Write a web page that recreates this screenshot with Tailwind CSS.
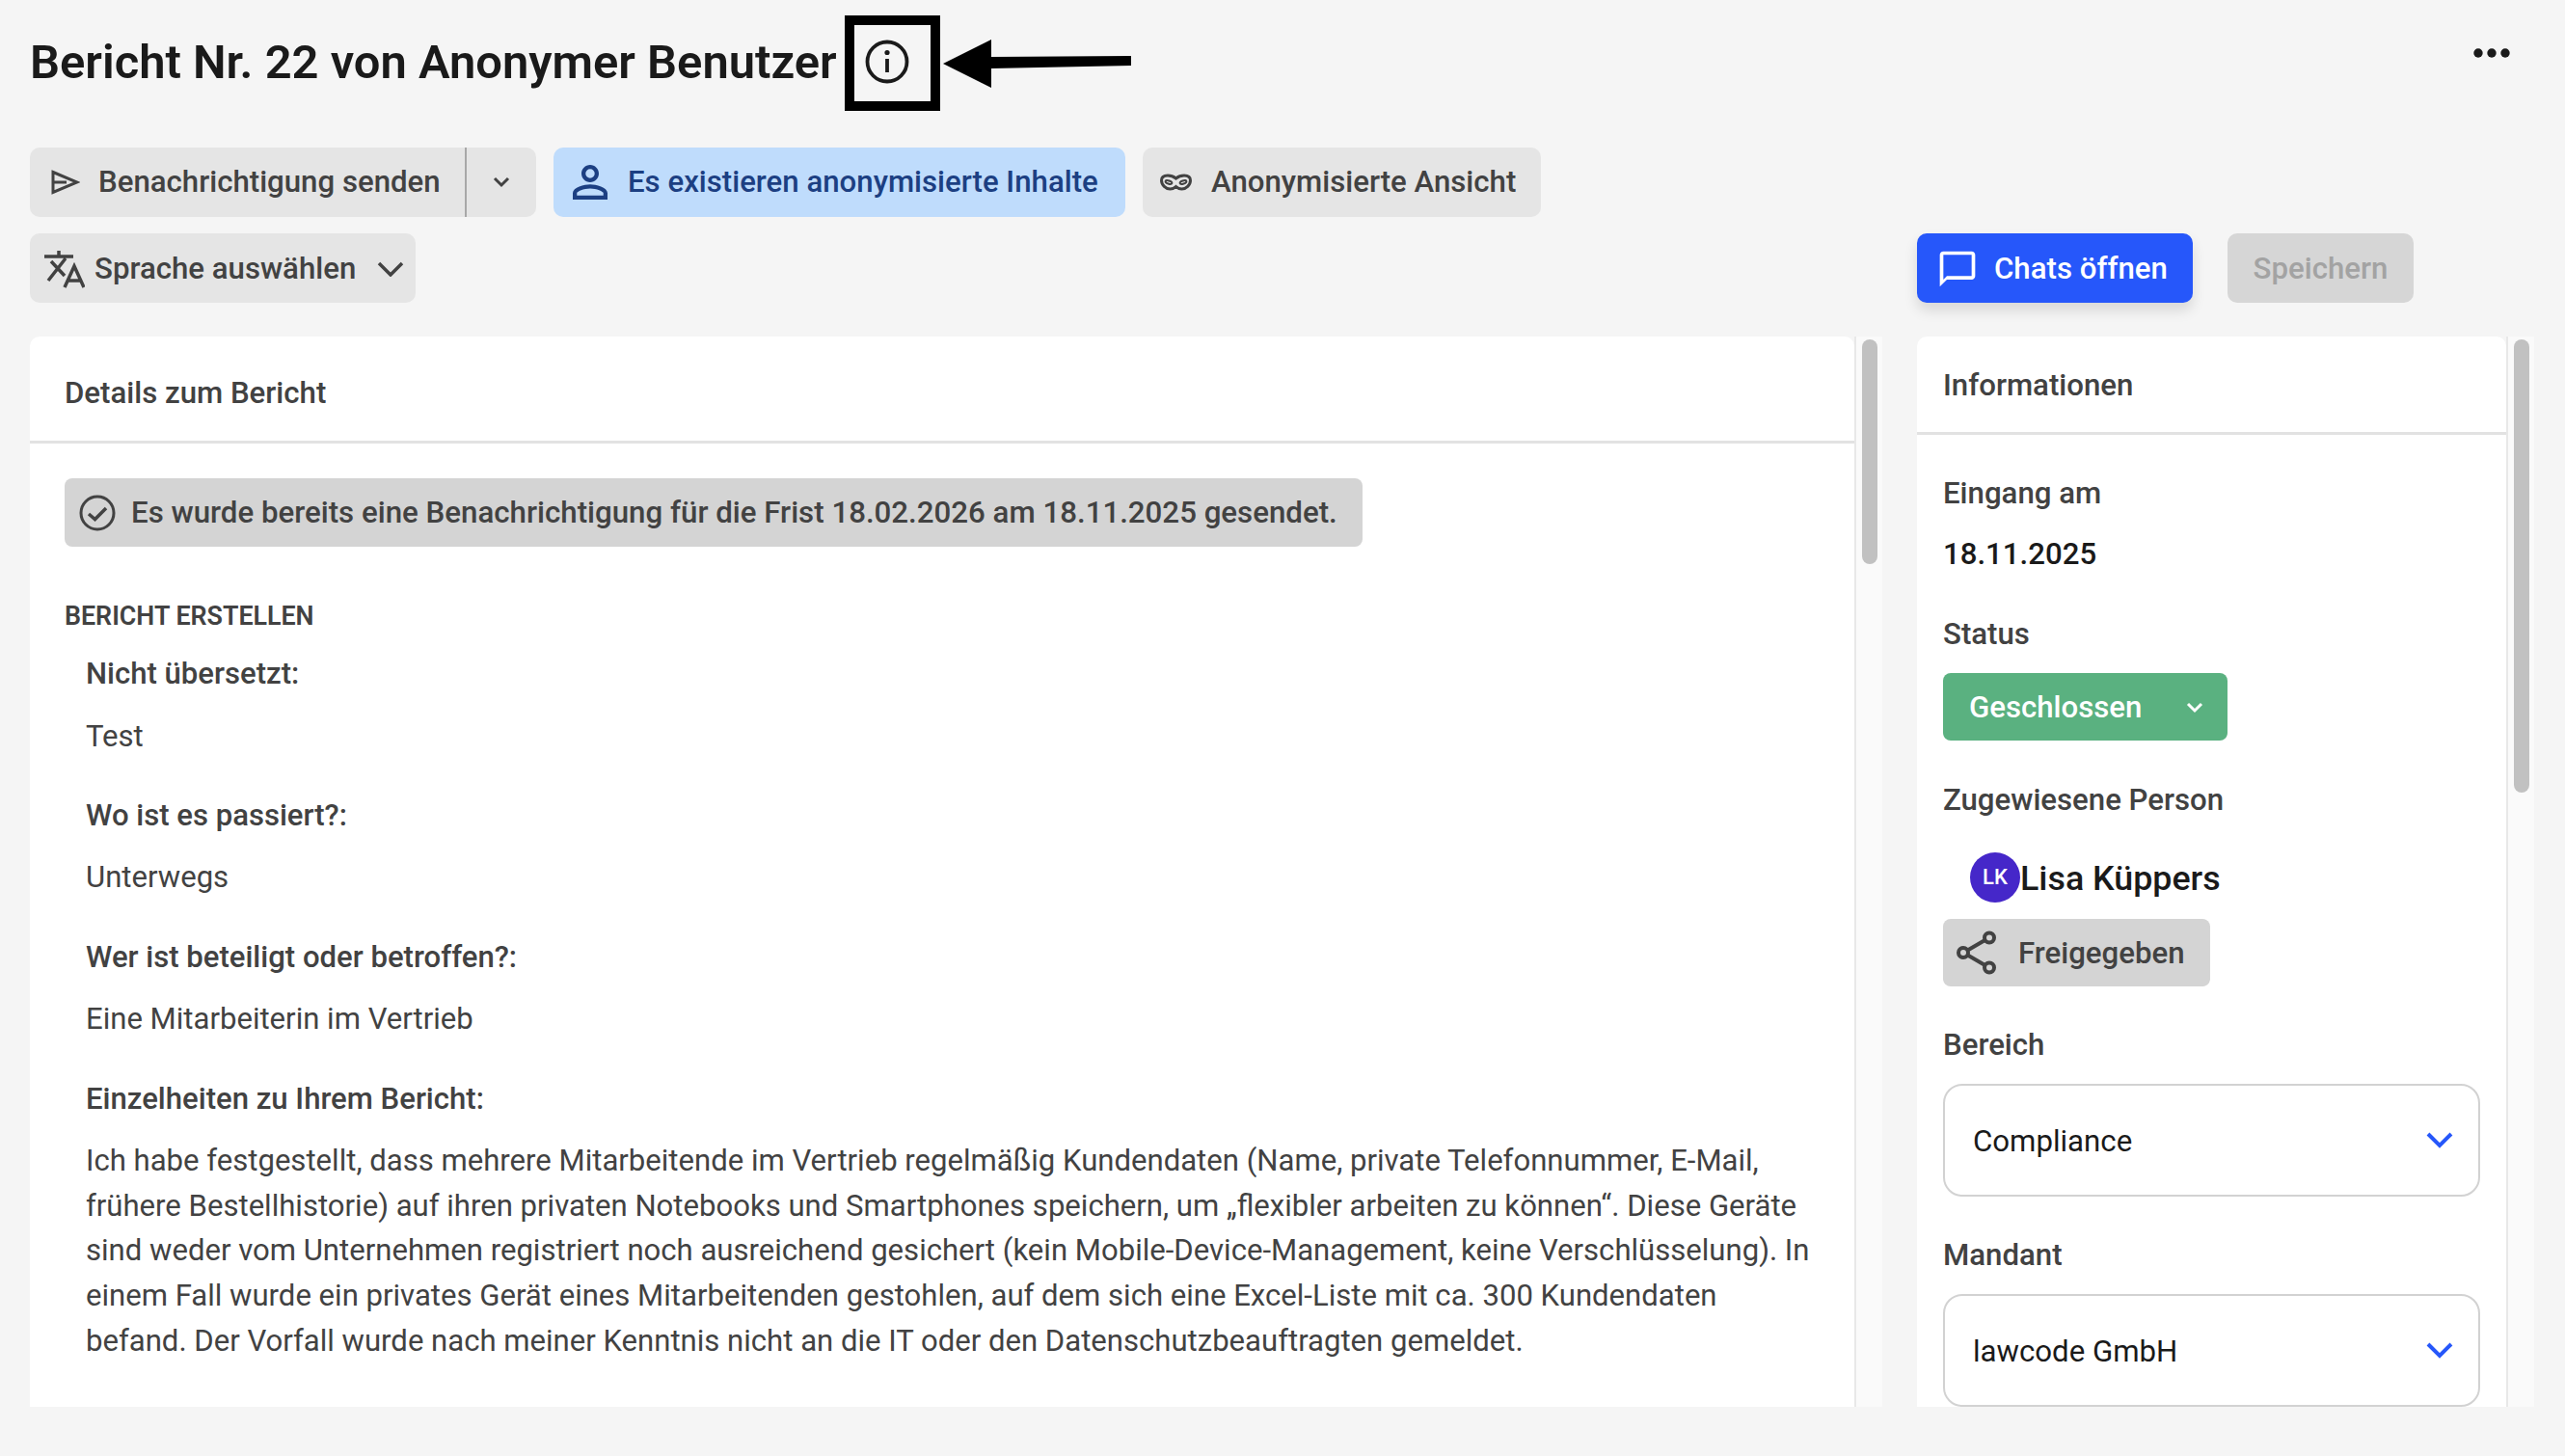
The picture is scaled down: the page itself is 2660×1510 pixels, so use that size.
<!DOCTYPE html>
<html lang="de">
<head>
<meta charset="utf-8">
<script src="https://cdn.jsdelivr.net/npm/@tailwindcss/browser@4"></script>
</head>
<body class="relative w-[2660px] h-[1510px] overflow-hidden bg-[#f5f5f5] font-['Roboto',sans-serif] text-[#424242]">

<header class="flex items-center justify-between h-[128px] pl-[31px] pr-[55px]">
  <div class="flex items-center">
    <h1 class="w-[836px] pt-[2px] whitespace-nowrap text-[48.9px] leading-[64px] font-semibold text-[#1a1a1a]">Bericht Nr. 22 von Anonymer Benutzer</h1>
    <svg class="ml-[30px] w-[46px] h-[46px]" viewBox="0 0 46 46" fill="none" stroke="#1a1a1a" stroke-width="3.8"><circle cx="23" cy="23" r="20.5"/><path d="M23 20v14"/><circle cx="23" cy="13.5" r="2.6" fill="#1a1a1a" stroke="none"/></svg>
  </div>
  <svg class="mb-[18px] w-[40px] h-[10px]" viewBox="0 0 40 10" fill="#1a1a1a"><circle cx="5" cy="5" r="4.7"/><circle cx="19" cy="5" r="4.7"/><circle cx="33" cy="5" r="4.7"/></svg>
</header>

<div class="flex items-center gap-[18px] h-[72px] mt-[25px] pl-[31px] text-[31.2px] font-medium">
  <div class="flex h-full w-[525px] rounded-[10px] bg-[#e5e5e5]">
    <div class="flex items-center gap-[19px] w-[453px] pl-[22px] border-r-2 border-[#a8a8a8]">
      <svg class="w-[30px] h-[26px] shrink-0" viewBox="0 0 30 26" fill="none" stroke="#424242" stroke-width="3"><path d="M2 2.500L27 13 2 23.500ZM2 13H16"/></svg>
      <span>Benachrichtigung senden</span>
    </div>
    <div class="flex flex-1 items-center justify-center">
      <svg class="w-[20px] h-[12px]" viewBox="0 0 20 12" fill="none" stroke="#424242" stroke-width="3"><path d="M3 2l7 7 7-7"/></svg>
    </div>
  </div>
  <div class="flex items-center gap-[12px] h-full w-[593px] pl-[11px] rounded-[10px] bg-[#bfdcfc] text-[#1c3f82]">
    <svg class="w-[54px] h-[54px] shrink-0" viewBox="0 0 24 24" fill="#1c3f82"><path d="M12 5.900a2.100 2.100 0 110 4.200 2.100 2.100 0 010-4.200m0 9c2.970 0 6.100 1.460 6.100 2.100v1.100H5.900V17c0-.64 3.130-2.100 6.100-2.100M12 4C9.790 4 8 5.790 8 8s1.790 4 4 4 4-1.790 4-4-1.790-4-4-4zm0 9c-2.670 0-8 1.340-8 4v3h16v-3c0-2.660-5.330-4-8-4z"/></svg>
    <span>Es existieren anonymisierte Inhalte</span>
  </div>
  <div class="flex items-center gap-[20px] h-full w-[413px] pl-[18px] rounded-[10px] bg-[#e5e5e5]">
    <svg class="w-[33px] h-[18px] shrink-0" viewBox="0 0 33 18" fill="none" stroke="#424242" stroke-width="3"><path d="M8 2C11 2 14 3 16.500 5C19 3 22 2 25 2C29 2 31.500 3.500 31.500 7C31.500 12 27 16 22.500 16C20 16 18 15 16.500 13.500C15 15 13 16 10.500 16C6 16 1.500 12 1.500 7C1.500 3.500 4 2 8 2Z"/><ellipse cx="9" cy="9" rx="3.500" ry="1.600" transform="rotate(20 9 9)" stroke-width="2"/><ellipse cx="24" cy="9" rx="3.500" ry="1.600" transform="rotate(-20 24 9)" stroke-width="2"/></svg>
    <span>Anonymisierte Ansicht</span>
  </div>
</div>

<div class="flex items-center justify-between h-[72px] mt-[17px] pl-[31px] pr-[157px] text-[31.2px] font-medium">
  <div class="flex items-center h-full w-[400px] pl-[15px] pt-[2px] rounded-[10px] bg-[#e5e5e5]">
    <svg class="w-[42px] h-[40px] shrink-0" viewBox="0 0 42 40" fill="none" stroke="#424242" stroke-width="3.500"><path d="M0 7H30M15 1V7M22 9L4 32M7 12L21 27M21 39L31 17L41 39M24 32H38"/></svg>
    <span class="ml-[10px]">Sprache auswählen</span>
    <svg class="ml-[22px] w-[28px] h-[16px]" viewBox="0 0 28 16" fill="none" stroke="#424242" stroke-width="3.500"><path d="M2 2l12 12 12-12"/></svg>
  </div>
  <div class="flex items-center gap-[36px]">
    <div class="flex items-center gap-[16px] h-[72px] w-[286px] pl-[20px] pt-[2px] rounded-[10px] bg-[#2657fa] text-white shadow-[0_8px_14px_rgba(0,0,0,0.12)]">
      <svg class="w-[44px] h-[44px] shrink-0" viewBox="0 0 24 24" fill="#fff"><path d="M20 2H4c-1.100 0-2 .9-2 2v18l4-4h14c1.100 0 2-.9 2-2V4c0-1.100-.9-2-2-2zm0 14H6l-2 2V4h16v12z"/></svg>
      <span>Chats öffnen</span>
    </div>
    <div class="flex items-center justify-center h-[72px] w-[193px] pt-[2px] rounded-[10px] bg-[#d6d6d6] text-[#a3a3a3]">Speichern</div>
  </div>
</div>

<main class="flex h-[1110px] mt-[35px] pl-[31px]">
  <section class="flex w-[1921px] h-full">
    <div class="w-[1892px] h-full overflow-hidden rounded-t-[10px] bg-white">
      <h2 class="flex items-center h-[111px] pt-[10px] pl-[36px] border-b-[3px] border-[#e2e2e2] text-[31.2px] font-medium">Details zum Bericht</h2>
      <div class="pl-[36px] pr-[40px]">
        <div class="flex items-center gap-[16px] w-[1346px] h-[71px] mt-[36px] pl-[15px] pt-[1px] rounded-[8px] bg-[#d4d4d4] text-[31.25px] font-medium whitespace-nowrap">
          <svg class="w-[38px] h-[38px] shrink-0" viewBox="0 0 38 38" fill="none" stroke="#424242" stroke-width="3"><circle cx="19" cy="19" r="17"/><path d="M10 20l6.500 5.500L28 14" stroke-width="3.500"/></svg>
          <span>Es wurde bereits eine Benachrichtigung für die Frist 18.02.2026 am 18.11.2025 gesendet.</span>
        </div>
        <h3 class="mt-[55px] text-[26.8px] leading-[34px] font-semibold">BERICHT ERSTELLEN</h3>
        <div class="pl-[22px] text-[31.1px] leading-[46.600px]">
          <p class="mt-[20px] font-medium">Nicht übersetzt:</p>
          <p class="mt-[18px]">Test</p>
          <p class="mt-[36px] font-medium">Wo ist es passiert?:</p>
          <p class="mt-[17px]">Unterwegs</p>
          <p class="mt-[37px] font-medium">Wer ist beteiligt oder betroffen?:</p>
          <p class="mt-[17px]">Eine Mitarbeiterin im Vertrieb</p>
          <p class="mt-[36px] font-medium">Einzelheiten zu Ihrem Bericht:</p>
          <p class="mt-[18px]">Ich habe festgestellt, dass mehrere Mitarbeitende im Vertrieb regelmäßig Kundendaten (Name, private Telefonnummer, E-Mail, frühere Bestellhistorie) auf ihren privaten Notebooks und Smartphones speichern, um „flexibler arbeiten zu können“. Diese Geräte sind weder vom Unternehmen registriert noch ausreichend gesichert (kein Mobile-Device-Management, keine Verschlüsselung). In einem Fall wurde ein privates Gerät eines Mitarbeitenden gestohlen, auf dem sich eine Excel-Liste mit ca. 300 Kundendaten befand. Der Vorfall wurde nach meiner Kenntnis nicht an die IT oder den Datenschutzbeauftragten gemeldet.</p>
        </div>
      </div>
    </div>
    <div class="w-[29px] h-full pt-[3px] pl-[6px] border-l-2 border-[#e8e8e8] bg-[#fafafa]">
      <div class="w-[16px] h-[233px] rounded-full bg-[#c1c1c1]"></div>
    </div>
  </section>

  <section class="flex w-[640px] h-full ml-[36px]">
    <div class="w-[611px] h-full overflow-hidden rounded-t-[10px] bg-white">
      <h2 class="flex items-center h-[102px] pt-[4px] pl-[27px] border-b-[3px] border-[#e2e2e2] text-[31.2px] font-medium">Informationen</h2>
      <div class="px-[27px] text-[31.2px] leading-[44px]">
        <p class="mt-[39px] font-medium">Eingang am</p>
        <p class="mt-[19px] font-medium text-[#1a1a1a]">18.11.2025</p>
        <p class="mt-[39px] font-medium">Status</p>
        <div class="flex items-center justify-between w-[295px] h-[70px] mt-[18px] pl-[27px] pr-[25px] pt-[1px] rounded-[8px] bg-[#5ab180] text-white font-medium">
          <span>Geschlossen</span>
          <svg class="w-[18px] h-[12px]" viewBox="0 0 18 12" fill="none" stroke="#fff" stroke-width="3"><path d="M2 2l7 7 7-7"/></svg>
        </div>
        <p class="mt-[40px] font-medium">Zugewiesene Person</p>
        <div class="flex items-center h-[52px] mt-[32px] pl-[28px]">
          <div class="flex items-center justify-center w-[52px] h-[52px] rounded-full bg-[#4527c9] text-white text-[22px] font-medium">LK</div>
          <span class="pt-[2px] text-[35.8px] font-medium text-[#1a1a1a]">Lisa Küppers</span>
        </div>
        <div class="flex items-center w-[277px] h-[70px] mt-[17px] pl-[14px] rounded-[8px] bg-[#d4d4d4] font-medium">
          <svg class="w-[42px] h-[46px] shrink-0" viewBox="0 0 42 46" fill="none" stroke="#424242" stroke-width="4"><circle cx="7" cy="23" r="5"/><circle cx="34" cy="7.500" r="5"/><circle cx="34" cy="38.500" r="5"/><path d="M11.500 20.500L29.500 10M11.500 25.500L29.500 36"/></svg>
          <span class="ml-[22px] pt-[2px]">Freigegeben</span>
        </div>
        <p class="mt-[39px] font-medium">Bereich</p>
        <div class="flex items-center justify-between h-[117px] mt-[18px] pl-[29px] pr-[26px] rounded-[20px] border-2 border-[#d2d2d2] text-[#1a1a1a]">
          <span class="pt-[2px]">Compliance</span>
          <svg class="w-[28px] h-[17px]" viewBox="0 0 28 17" fill="none" stroke="#2657fa" stroke-width="4"><path d="M2 2l12 12 12-12"/></svg>
        </div>
        <p class="mt-[39px] font-medium">Mandant</p>
        <div class="flex items-center justify-between h-[117px] mt-[18px] pl-[29px] pr-[26px] rounded-[20px] border-2 border-[#d2d2d2] text-[#1a1a1a]">
          <span class="pt-[2px]">lawcode GmbH</span>
          <svg class="w-[28px] h-[17px]" viewBox="0 0 28 17" fill="none" stroke="#2657fa" stroke-width="4"><path d="M2 2l12 12 12-12"/></svg>
        </div>
      </div>
    </div>
    <div class="w-[29px] h-full pt-[3px] pl-[6px] border-l-2 border-[#e8e8e8] bg-[#fafafa]">
      <div class="w-[16px] h-[470px] rounded-full bg-[#c1c1c1]"></div>
    </div>
  </section>
</main>

<div class="absolute left-[876px] top-[16px] w-[99px] h-[99px] border-[10px] border-black"></div>
<svg class="absolute left-[978px] top-[40px] w-[196px] h-[52px]" viewBox="0 0 196 52" fill="#000"><path d="M0 26L50 1V19L195 18V28L50 31V51Z"/></svg>

</body>
</html>
